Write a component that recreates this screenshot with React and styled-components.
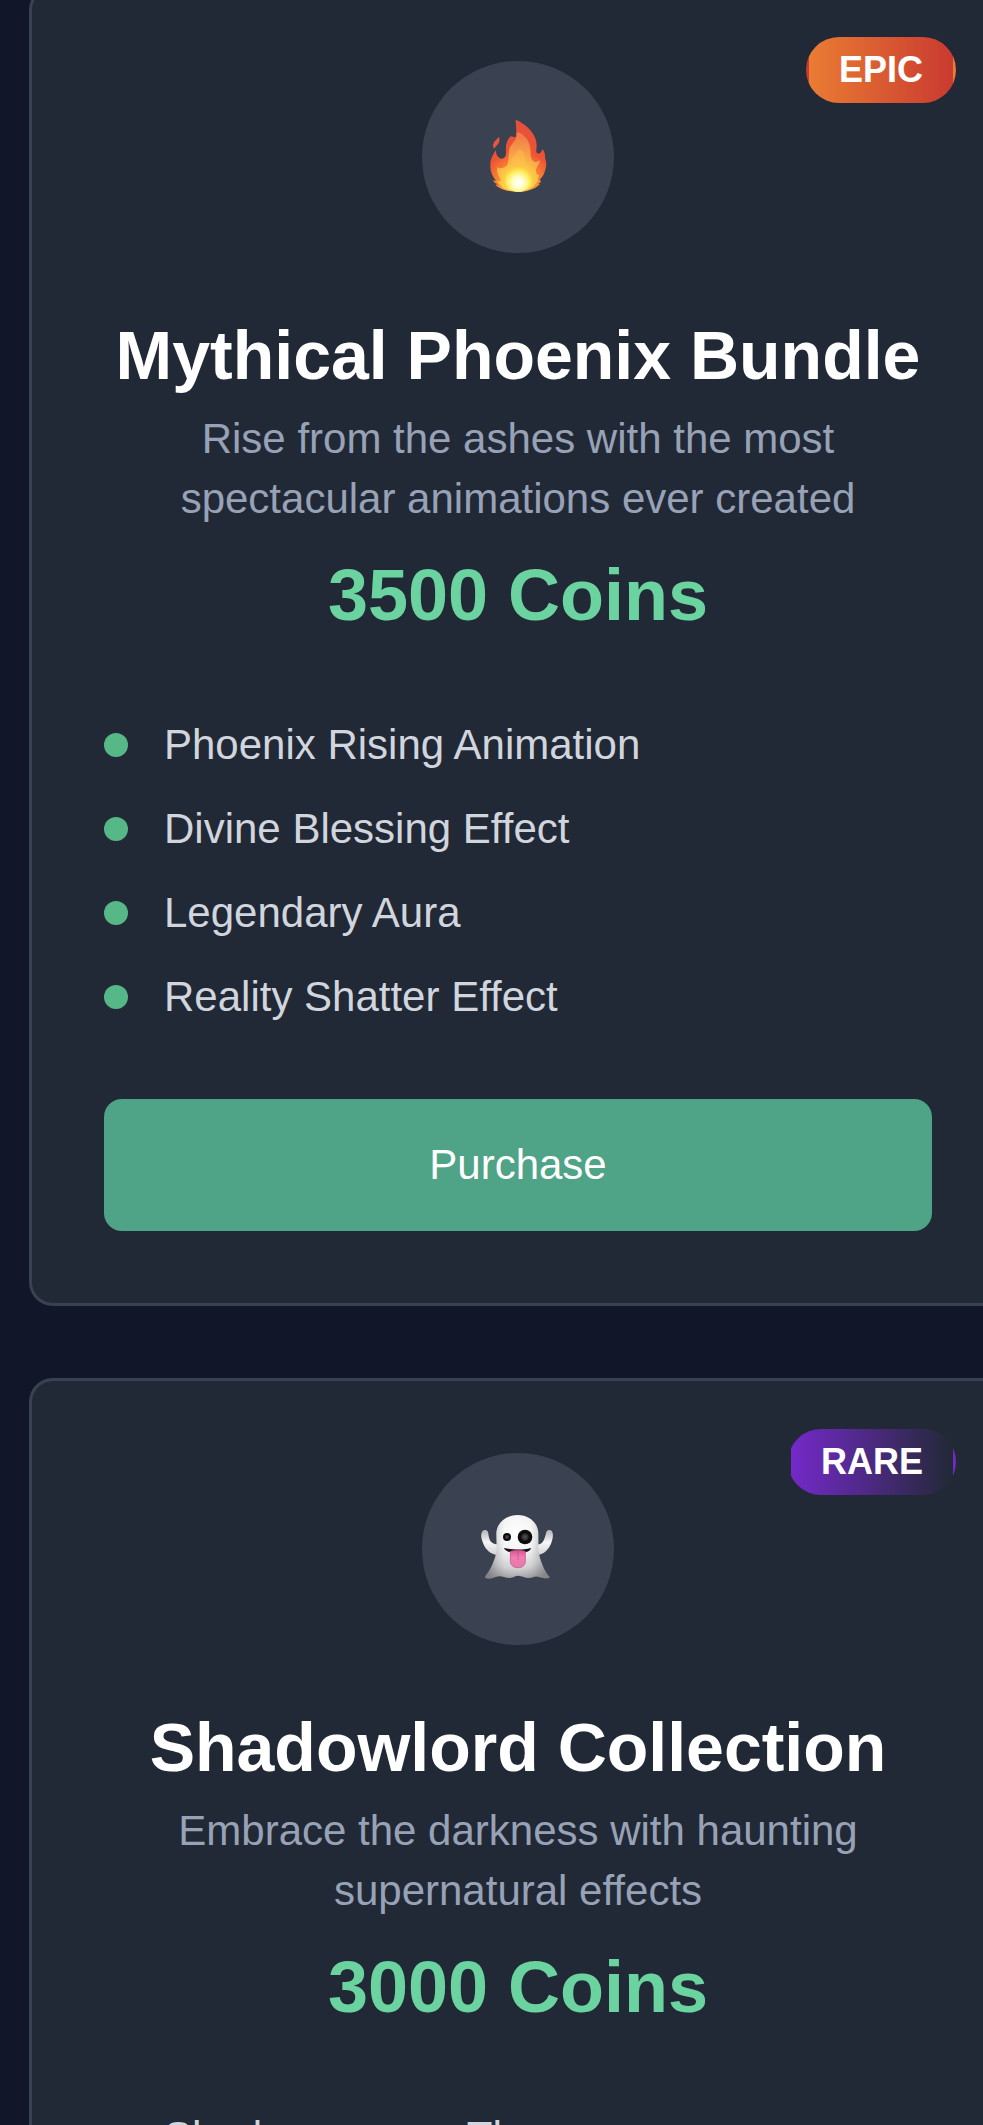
import React from 'react'
import styled, { createGlobalStyle } from 'styled-components'

const GlobalStyle = createGlobalStyle`
    * {
        box-sizing: border-box;
    }

    body {
        margin: 0;
        background: #111628;
        font-family: "Liberation Sans", Arial, Helvetica, sans-serif;
    }
`

const Viewport = styled.main`
    height: 100vh;
    overflow: hidden;
    background: #111628;
`

const CardList = styled.div`
    display: flex;
    flex-direction: column;
    gap: 72px;
    margin: -14px -24px 0 29px;
`

const Card = styled.article`
    position: relative;
    display: flex;
    flex-direction: column;
    gap: 72px;
    padding: 72px;
    background: #222936;
    border: 3px solid #3a4150;
    border-radius: 24px;
`

const Badge = styled.span`
    position: absolute;
    top: 48px;
    right: 48px;
    padding: 6px 30px;
    border: 3px solid transparent;
    border-radius: 33px;
    background: linear-gradient(to right, ${props => props.$from}, ${props => props.$to});
    font-weight: 700;
    font-size: 36px;
    line-height: 48px;
    color: #FFFFFF;
`

const Header = styled.header`
    display: flex;
    flex-direction: column;
    align-items: center;
    gap: 18px;
    text-align: center;
`

const IconCircle = styled.div`
    display: flex;
    align-items: center;
    justify-content: center;
    width: 192px;
    height: 192px;
    margin-bottom: 48px;
    border-radius: 50%;
    background: #3a4150;

    svg {
        width: 72px;
        height: 72px;
        overflow: visible;
    }
`

const Title = styled.h3`
    margin: 0;
    font-weight: 700;
    font-size: 68px;
    line-height: 72px;
    color: #FFFFFF;
`

const Description = styled.p`
    margin: 0;
    font-size: 42px;
    line-height: 60px;
    color: #98a2b6;
`

const Price = styled.div`
    font-weight: 700;
    font-size: 72px;
    line-height: 96px;
    color: #6bd3a0;
`

const Features = styled.ul`
    display: flex;
    flex-direction: column;
    gap: 24px;
    margin: 0;
    padding: 0;
    list-style: none;
`

const Feature = styled.li`
    display: flex;
    align-items: center;
    gap: 36px;
    font-size: 42px;
    line-height: 60px;
    color: #d1d5dd;

    &::before {
        content: "";
        width: 24px;
        height: 24px;
        border-radius: 50%;
        background: #57b887;
    }
`

const PurchaseButton = styled.button`
    width: 100%;
    padding: 36px;
    border: none;
    border-radius: 18px;
    background: #4fa387;
    font-family: inherit;
    font-size: 42px;
    line-height: 60px;
    color: #FFFFFF;
    cursor: pointer;
`

function FireIcon() {
  return (
    <svg viewBox="0 15 216 216" aria-hidden="true">
        <defs>
            <radialGradient id="fireOuter" gradientUnits="userSpaceOnUse" cx="110" cy="210" r="195">
                <stop offset="0" stopColor="#ffd84a" />
                <stop offset="0.3" stopColor="#fb8c35" />
                <stop offset="0.55" stopColor="#ee5433" />
                <stop offset="1" stopColor="#e4503c" />
            </radialGradient>
            <radialGradient id="fireMiddle" gradientUnits="userSpaceOnUse" cx="109" cy="205" r="145">
                <stop offset="0" stopColor="#fff59a" />
                <stop offset="0.3" stopColor="#fdd146" />
                <stop offset="0.6" stopColor="#f9a548" />
                <stop offset="1" stopColor="#f07d4a" />
            </radialGradient>
            <radialGradient id="fireCore" gradientUnits="userSpaceOnUse" cx="109" cy="200" r="50">
                <stop offset="0" stopColor="#ffffff" />
                <stop offset="0.35" stopColor="#fffdc8" />
                <stop offset="0.7" stopColor="#ffed58" />
                <stop offset="1" stopColor="#ffd53f" stopOpacity="0" />
            </radialGradient>
        </defs>
        <path
            fill="url(#fireOuter)"
            d="M101 11C132 24 164 53 164 88C164 99 160 108 166 112C174 115 179 108 181 100C188 107 190 115 189 126C195 139 193 153 189 164C187 174 182 181 174 190L177 198C172 202 168 202 168 202L174 204C158 221 130 228 107 228C80 228 50 218 40 206L48 205C39 203 35 198 33 193L42 194C31 181 24 165 25 148C24 129 35 115 41 102C42 115 48 128 60 128C71 127 73 115 72 103C70 86 76 70 86 61L101 64C105 44 101 26 101 11Z"
        />
        <path fill="#e8583f" d="M51 62C54 72 52 80 46 86L36 98C31 88 33 80 40 74Z" />
        <path
            fill="url(#fireMiddle)"
            d="M105 49C124 51 140 72 144 92C148 109 143 124 153 134C159 142 169 136 174 133C174 145 163 151 162 163C162 173 165 180 172 176C166 189 168 193 168 195L154 211C138 226 80 231 60 213L44 194C51 197 58 199 55 189C51 180 42 169 46 153C54 160 68 156 75 148C81 137 79 113 82 99C85 85 105 77 105 49Z"
        />
        <path fill="#ffc34a" fillOpacity="0.45" d="M109 100C128 104 131 121 129 139C129 149 139 156 145 161C147 177 157 186 152 199C137 218 80 220 64 202C59 191 69 181 78 175C87 161 89 151 87 134C87 119 105 116 109 100Z" />
        <ellipse cx="109" cy="190" rx="41" ry="38" fill="url(#fireCore)" />
    </svg>
  )
}

const ghostShape = 'M125 21C91 21 62 44 61 76L62 119C62 142 51 167 42 184C36 196 28 203 27 207C33 217 51 209 62 206C76 202 86 210 99 210C111 210 117 203 127 203C140 203 149 212 160 210C171 209 174 204 185 206C199 209 218 215 221 207C205 191 191 154 187 129L187 76C186 44 159 21 125 21Z'

function GhostIcon() {
  return (
    <svg viewBox="18 15 216 216" aria-hidden="true">
        <defs>
            <radialGradient id="ghostBody" gradientUnits="userSpaceOnUse" cx="122" cy="75" r="150">
                <stop offset="0" stopColor="#ffffff" />
                <stop offset="0.4" stopColor="#f3f3f4" />
                <stop offset="0.72" stopColor="#d0d0d2" />
                <stop offset="1" stopColor="#8c8c8f" />
            </radialGradient>
            <linearGradient id="ghostArm" x1="0" y1="0" x2="0" y2="1">
                <stop offset="0" stopColor="#b4b4b7" />
                <stop offset="0.5" stopColor="#f6f6f7" />
                <stop offset="1" stopColor="#d2d2d4" />
            </linearGradient>
            <linearGradient id="ghostEdge" x1="0" y1="0" x2="1" y2="0">
                <stop offset="0" stopColor="#747578" stopOpacity="0.6" />
                <stop offset="0.3" stopColor="#a0a0a3" stopOpacity="0" />
                <stop offset="0.7" stopColor="#a0a0a3" stopOpacity="0" />
                <stop offset="1" stopColor="#747578" stopOpacity="0.6" />
            </linearGradient>
            <radialGradient id="ghostPupil">
                <stop offset="0" stopColor="#555555" />
                <stop offset="0.45" stopColor="#292929" />
                <stop offset="0.6" stopColor="#080808" />
                <stop offset="1" stopColor="#111111" />
            </radialGradient>
            <linearGradient id="ghostTongue" x1="0" y1="0" x2="0" y2="1">
                <stop offset="0" stopColor="#d95493" />
                <stop offset="0.4" stopColor="#f17bb3" />
                <stop offset="1" stopColor="#e678ad" />
            </linearGradient>
        </defs>
        <path fill="url(#ghostArm)" d="M18 72C22 64 32 64 36 72C38 80 38 94 46 102C52 109 63 108 67 110L61 140C48 139 29 127 22 107C17 94 13 82 18 72Z" />
        <path fill="url(#ghostArm)" d="M229 72C225 64 215 64 211 72C209 80 206 94 200 102C195 109 185 111 181 110L188 140C200 139 217 127 225 107C230 94 233 82 229 72Z" />
        <path fill="url(#ghostBody)" d={ghostShape} />
        <path fill="url(#ghostEdge)" d={ghostShape} />
        <circle cx="93" cy="87" r="12" fill="url(#ghostPupil)" />
        <circle cx="147" cy="87" r="22" fill="url(#ghostPupil)" />
        <path fill="#111111" d="M84 120C108 126 141 126 165 120C163 130 150 135 125 135C101 135 88 130 84 120Z" />
        <path fill="url(#ghostTongue)" stroke="#b94b7f" strokeWidth="2" d="M103 130C117 126 134 126 148 130L148 160C147 173 139 179 126 179C113 179 104 173 103 160Z" />
        <path fill="none" stroke="#c34e86" strokeWidth="2" d="M126 130L126 155" />
    </svg>
  )
}

const bundles = [
  {
    title: 'Mythical Phoenix Bundle',
    description: 'Rise from the ashes with the most spectacular animations ever created',
    price: 3500,
    badge: 'EPIC',
    from: '#ea7c33',
    to: '#c93a30',
    icon: FireIcon,
    features: [
      'Phoenix Rising Animation',
      'Divine Blessing Effect',
      'Legendary Aura',
      'Reality Shatter Effect',
    ],
  },
  {
    title: 'Shadowlord Collection',
    description: 'Embrace the darkness with haunting supernatural effects',
    price: 3000,
    badge: 'RARE',
    from: '#7429c9',
    to: '#222936',
    icon: GhostIcon,
    features: ['Shadowmancer Theme'],
  },
]

function BundleCard({bundle}) {
  const Icon = bundle.icon

  return (
    <Card>
        <Badge $from={bundle.from} $to={bundle.to}>{bundle.badge}</Badge>
        <Header>
            <IconCircle>
                <Icon />
            </IconCircle>
            <Title>{bundle.title}</Title>
            <Description>{bundle.description}</Description>
            <Price>{bundle.price} Coins</Price>
        </Header>
        <Features>
            {bundle.features.map(feature => (
                <Feature key={feature}>{feature}</Feature>
            ))}
        </Features>
        <PurchaseButton type="button">Purchase</PurchaseButton>
    </Card>
  )
}

function App() {
  return (
    <Viewport>
        <GlobalStyle />
        <CardList>
            {bundles.map(bundle => (
                <BundleCard key={bundle.title} bundle={bundle} />
            ))}
        </CardList>
    </Viewport>
  )
}

export default App
